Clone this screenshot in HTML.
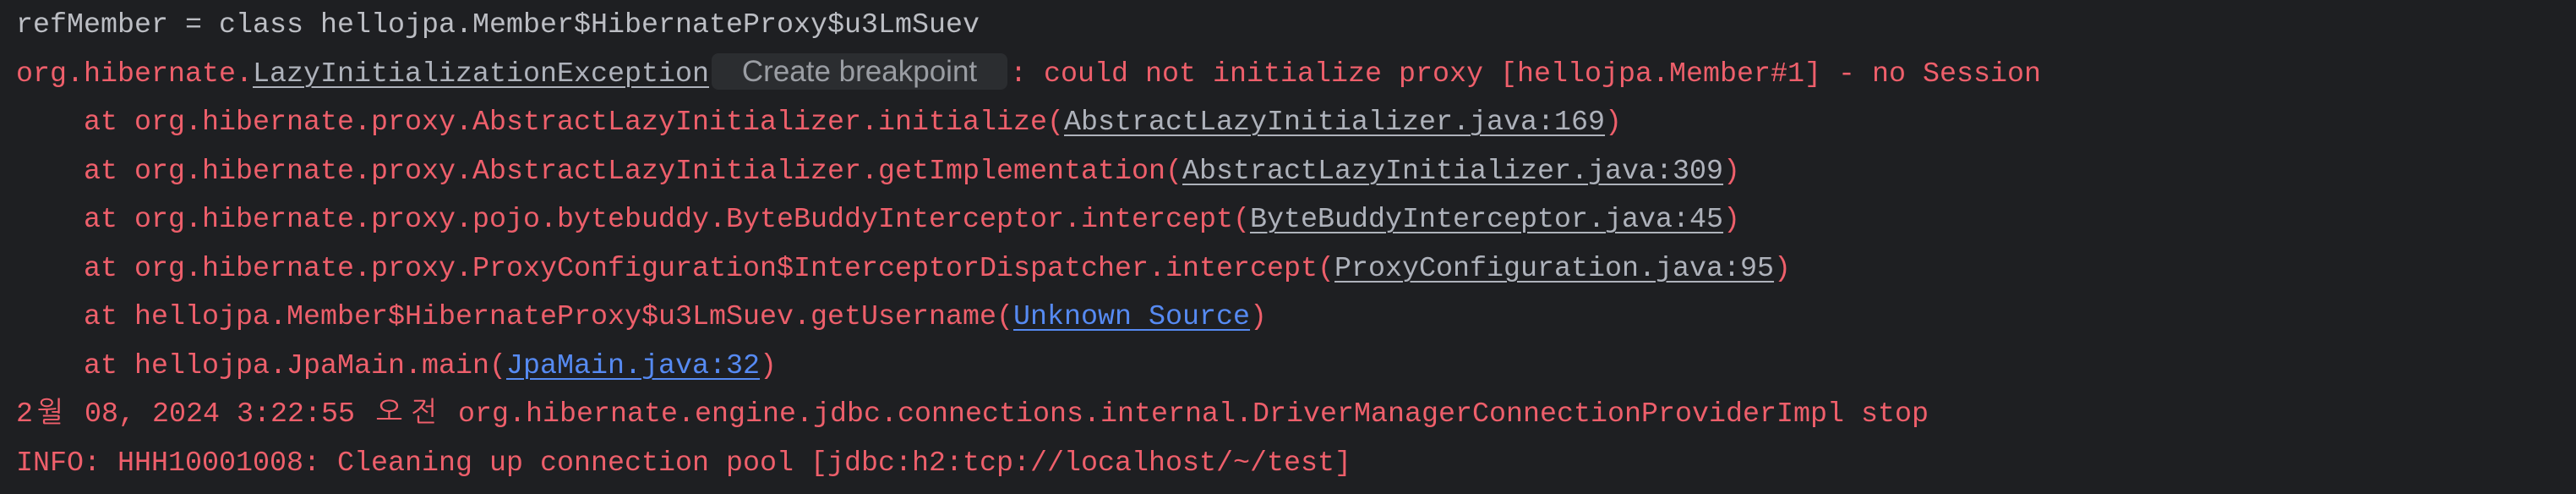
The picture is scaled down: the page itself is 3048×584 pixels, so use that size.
<!DOCTYPE html>
<html><head><meta charset="utf-8"><style>
html,body{margin:0;padding:0;background:#1e1f22;width:3048px;height:584px;overflow:hidden}
.c{position:absolute;left:19px;top:2px;font-family:"Liberation Mono","NanumGothic",monospace;font-size:33.33px;line-height:57.5px;white-space:pre;color:#bcbec4}
.r{color:#ee5f6b}
.g{color:#aeb2bb;text-decoration:underline;text-underline-offset:6px;text-decoration-thickness:2px}
.b{color:#568af2;text-decoration:underline;text-underline-offset:6px;text-decoration-thickness:2px}
.p{display:inline-block;width:350px;height:43px;line-height:43px;vertical-align:middle;margin:0 3px 0 3px;position:relative;top:-2px;background:#2b2d30;border-radius:8px;color:#9a9da3;font-family:"Liberation Sans",sans-serif;font-size:35px;text-align:center}
.k{display:inline-block;width:41px;text-align:center}
</style></head><body>
<div class="c"><div>refMember = class hellojpa.Member$HibernateProxy$u3LmSuev</div><div class="r">org.hibernate.<span class="g">LazyInitializationException</span><span class="p">Create breakpoint</span>: could not initialize proxy [hellojpa.Member#1] - no Session</div><div class="r">    at org.hibernate.proxy.AbstractLazyInitializer.initialize(<span class="g">AbstractLazyInitializer.java:169</span>)</div><div class="r">    at org.hibernate.proxy.AbstractLazyInitializer.getImplementation(<span class="g">AbstractLazyInitializer.java:309</span>)</div><div class="r">    at org.hibernate.proxy.pojo.bytebuddy.ByteBuddyInterceptor.intercept(<span class="g">ByteBuddyInterceptor.java:45</span>)</div><div class="r">    at org.hibernate.proxy.ProxyConfiguration$InterceptorDispatcher.intercept(<span class="g">ProxyConfiguration.java:95</span>)</div><div class="r">    at hellojpa.Member$HibernateProxy$u3LmSuev.getUsername(<span class="b">Unknown Source</span>)</div><div class="r">    at hellojpa.JpaMain.main(<span class="b">JpaMain.java:32</span>)</div><div class="r">2<span class="k">월</span> 08, 2024 3:22:55 <span class="k">오</span><span class="k">전</span> org.hibernate.engine.jdbc.connections.internal.DriverManagerConnectionProviderImpl stop</div><div class="r">INFO: HHH10001008: Cleaning up connection pool [jdbc:h2:tcp://localhost/~/test]</div></div>
</body></html>
